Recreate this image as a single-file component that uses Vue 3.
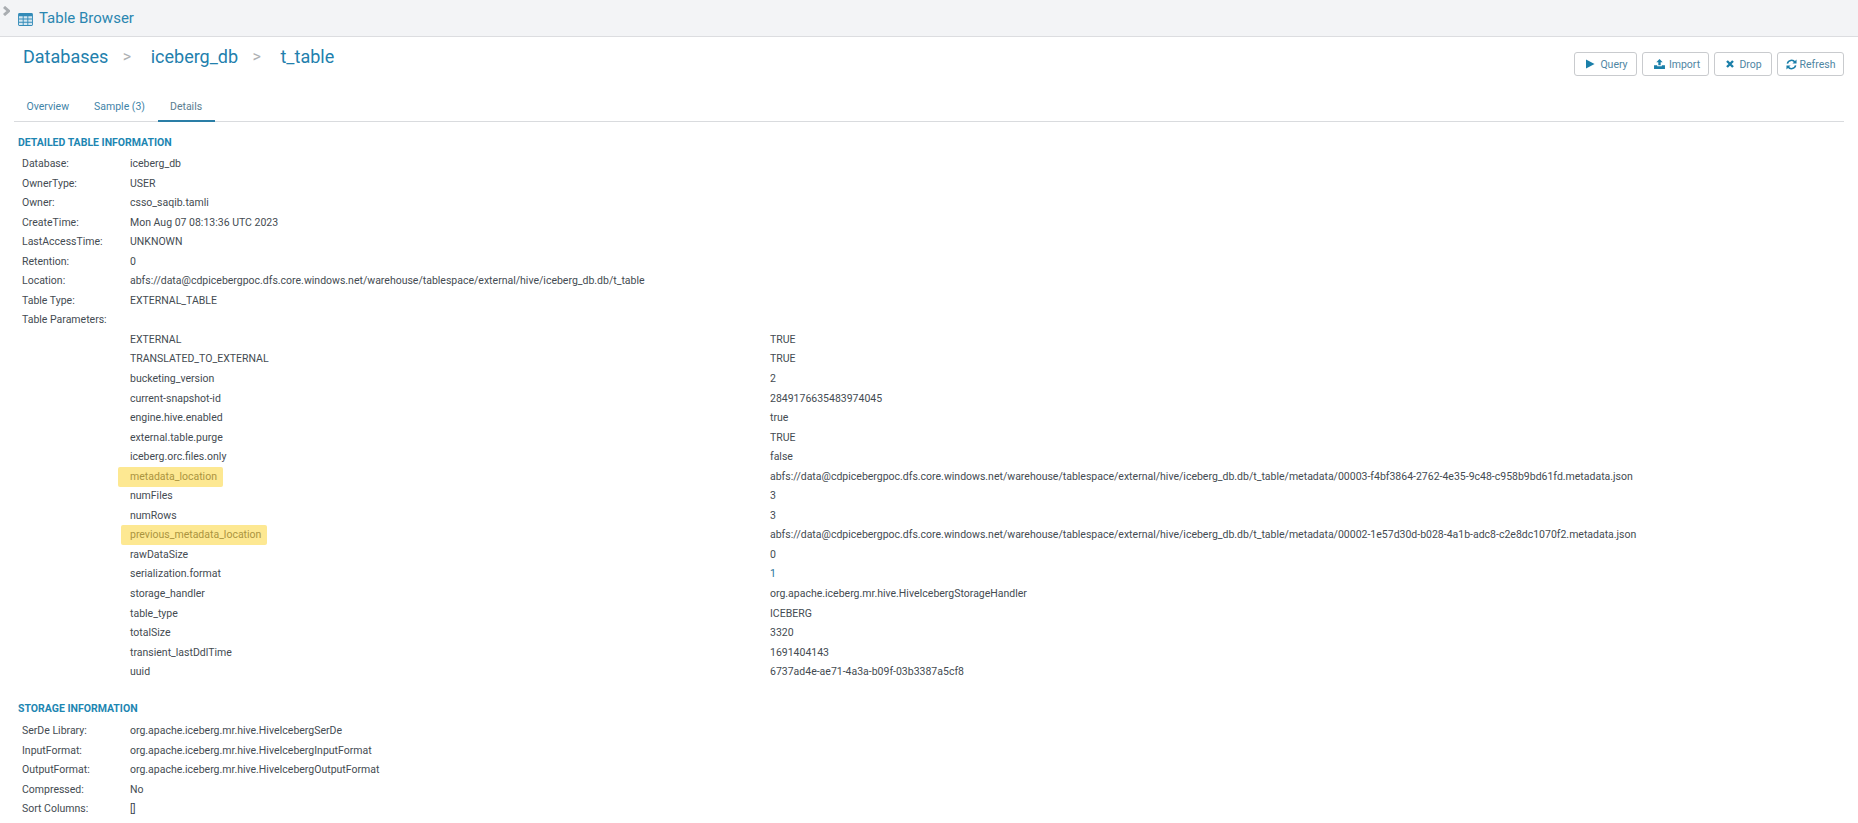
<script setup>
const details = [
  ['Database:', 'iceberg_db'],
  ['OwnerType:', 'USER'],
  ['Owner:', 'csso_saqib.tamli'],
  ['CreateTime:', 'Mon Aug 07 08:13:36 UTC 2023'],
  ['LastAccessTime:', 'UNKNOWN'],
  ['Retention:', '0'],
  ['Location:', 'abfs://data@cdpicebergpoc.dfs.core.windows.net/warehouse/tablespace/external/hive/iceberg_db.db/t_table'],
  ['Table Type:', 'EXTERNAL_TABLE'],
  ['Table Parameters:', ''],
]
const params = [
  ['EXTERNAL', 'TRUE'],
  ['TRANSLATED_TO_EXTERNAL', 'TRUE'],
  ['bucketing_version', '2'],
  ['current-snapshot-id', '2849176635483974045'],
  ['engine.hive.enabled', 'true'],
  ['external.table.purge', 'TRUE'],
  ['iceberg.orc.files.only', 'false'],
  ['metadata_location', 'abfs://data@cdpicebergpoc.dfs.core.windows.net/warehouse/tablespace/external/hive/iceberg_db.db/t_table/metadata/00003-f4bf3864-2762-4e35-9c48-c958b9bd61fd.metadata.json', 'short'],
  ['numFiles', '3'],
  ['numRows', '3'],
  ['previous_metadata_location', 'abfs://data@cdpicebergpoc.dfs.core.windows.net/warehouse/tablespace/external/hive/iceberg_db.db/t_table/metadata/00002-1e57d30d-b028-4a1b-adc8-c2e8dc1070f2.metadata.json', 'long'],
  ['rawDataSize', '0'],
  ['serialization.format', '1', '', true],
  ['storage_handler', 'org.apache.iceberg.mr.hive.HiveIcebergStorageHandler'],
  ['table_type', 'ICEBERG'],
  ['totalSize', '3320'],
  ['transient_lastDdlTime', '1691404143'],
  ['uuid', '6737ad4e-ae71-4a3a-b09f-03b3387a5cf8'],
]
const storage = [
  ['SerDe Library:', 'org.apache.iceberg.mr.hive.HiveIcebergSerDe'],
  ['InputFormat:', 'org.apache.iceberg.mr.hive.HiveIcebergInputFormat'],
  ['OutputFormat:', 'org.apache.iceberg.mr.hive.HiveIcebergOutputFormat'],
  ['Compressed:', 'No'],
  ['Sort Columns:', '[]'],
]
</script>

<template>
  <div class="page">
    <header class="topbar">
      <svg class="chev" viewBox="0 0 8 10" width="8" height="10"><path d="M2 1 6.500 5 2 9" fill="none" stroke="#a9adb1" stroke-width="3"/></svg>
      <svg class="tbl" viewBox="0 0 16 14" width="15" height="13">
        <path fill="#338bb8" d="M1.500 0h13A1.500 1.500 0 0 1 16 1.500v11a1.500 1.500 0 0 1-1.500 1.500h-13A1.500 1.500 0 0 1 0 12.500v-11A1.500 1.500 0 0 1 1.500 0z"/>
        <path fill="#d5e7f1" d="M1 3.500h4v2.500H1zM6 3.500h4v2.500H6zM11 3.500h4v2.500h-4zM1 7h4v2.500H1zM6 7h4v2.500H6zM11 7h4v2.500h-4zM1 10.500h4V13H1zM6 10.500h4V13H6zM11 10.500h4V13h-4z"/>
      </svg>
      <span class="app-title">Table Browser</span>
    </header>

    <div class="head">
      <nav class="crumbs">
        <span>Databases</span><i>&gt;</i><span>iceberg_db</span><i>&gt;</i><span>t_table</span>
      </nav>
      <div class="actions">
        <button class="q">
          <svg viewBox="0 0 10 10" width="9" height="10"><path fill="#1a7fa9" d="M0 0 9.500 5 0 10z"/></svg>Query
        </button>
        <button class="i">
          <svg viewBox="0 0 12 11" width="11" height="10"><path fill="#1a7fa9" d="M6 0 9.500 3.500H7.300V7H4.700V3.500H2.500zM0 7h3.500v1h5V7H12v4H0z"/></svg>Import
        </button>
        <button class="d">
          <svg viewBox="0 0 8 8" width="8" height="8"><path d="M1 1 7 7M7 1 1 7" stroke="#1a7fa9" stroke-width="2.400" fill="none"/></svg>Drop
        </button>
        <button class="r">
          <svg viewBox="0 0 12 12" width="11" height="11"><path fill="none" stroke="#1a7fa9" stroke-width="1.700" d="M1.500 5A4.600 4.600 0 0 1 9.800 3.500M10.500 7A4.600 4.600 0 0 1 2.200 8.500"/><path fill="#1a7fa9" d="M11.500 0.500V5H7zM0.500 11.500V7H5z"/></svg>Refresh
        </button>
      </div>
    </div>

    <div class="tabs">
      <a>Overview</a>
      <a>Sample (3)</a>
      <a class="active">Details</a>
    </div>

    <section class="info first">
      <h3>DETAILED TABLE INFORMATION</h3>
      <div v-for="d in details" :key="d[0]" class="row">
        <span>{{ d[0] }}</span><span>{{ d[1] }}</span>
      </div>
      <div v-for="p in params" :key="p[0]" class="row">
        <span></span>
        <span class="param"><mark v-if="p[2]" :class="p[2]">{{ p[0] }}</mark><template v-else>{{ p[0] }}</template></span>
        <span :class="{ link: p[3] }">{{ p[1] }}</span>
      </div>
    </section>

    <section class="info storage">
      <h3>STORAGE INFORMATION</h3>
      <div v-for="d in storage" :key="d[0]" class="row">
        <span>{{ d[0] }}</span><span>{{ d[1] }}</span>
      </div>
    </section>
  </div>
</template>

<style>
html, body { margin: 0; background: #fff; overflow: hidden; }
</style>

<style scoped>
.page {
  width: 1858px;
  height: 823px;
  overflow: hidden;
  font-family: Roboto, "Liberation Sans", sans-serif;
  font-size: 10.500px;
  color: #444b52;
  position: relative;
}
.topbar {
  height: 37px;
  box-sizing: border-box;
  background: #f3f4f6;
  border-bottom: 1px solid #dcdde0;
  display: flex;
  align-items: center;
  padding-left: 18px;
  position: relative;
}
.chev { position: absolute; left: 2px; top: 6px; }
.tbl { margin-top: 3px; }
.app-title { font-size: 15px; color: #2a86b0; margin-left: 6px; }
.head {
  display: flex;
  justify-content: space-between;
  padding: 9px 14px 0 23px;
  height: 35px;
}
.crumbs { font-size: 18px; color: #2280ad; display: flex; line-height: 22px; }
.crumbs i { font-style: normal; color: #aeb1b4; font-size: 16px; margin: 0 19.500px 0 14.500px; }
.actions { display: flex; gap: 5px; margin-top: 6px; }
.actions button {
  height: 24px;
  box-sizing: border-box;
  background: #fff;
  border: 1px solid #c9cbce;
  border-radius: 3px;
  font: 10.500px Roboto, sans-serif;
  color: #4f86a3;
  display: flex;
  align-items: center;
  justify-content: center;
  padding: 0;
}
.actions .q { width: 63px; gap: 5px; padding-left: 3px; }
.actions .i { width: 67px; gap: 4px; padding-left: 3px; }
.actions .d { width: 58px; gap: 5px; padding-left: 2px; }
.actions .r { width: 67px; gap: 3px; }
.tabs {
  margin: 0 14px;
  height: 41px;
  box-sizing: border-box;
  border-bottom: 1px solid #d9dbde;
  display: flex;
  align-items: flex-end;
}
.tabs a {
  padding: 0 12.500px;
  height: 31px;
  line-height: 31px;
  box-sizing: border-box;
  color: #3f84a8;
  margin-bottom: -1px;
}
.tabs a.active { color: #5b7d90; border-bottom: 2px solid #2a7ea6; }
.info { padding-left: 18px; }
.info h3 {
  margin: 0;
  padding: 13px 0 3px;
  line-height: 16px;
  font-size: 10.500px;
  font-weight: 700;
  color: #1d86b2;
}
.row {
  display: grid;
  grid-template-columns: 108px 640px 1fr;
  line-height: 19.550px;
  height: 19.550px;
  padding-left: 4px;
  white-space: nowrap;
}
.row > span:nth-child(2):last-child { grid-column: 2 / 4; }
.param mark {
  background: #fde892;
  color: #ab9440;
  display: inline-block;
  height: 20px;
  border-radius: 2px;
}
.param mark.short { margin-left: -12px; padding: 0 6px 0 12px; }
.param mark.long { margin-left: -9px; padding: 0 6px 0 9px; }
.link { color: #2a7397; }
.storage { margin-top: 6px; }
.storage h3 { padding-bottom: 4.500px; }
</style>
